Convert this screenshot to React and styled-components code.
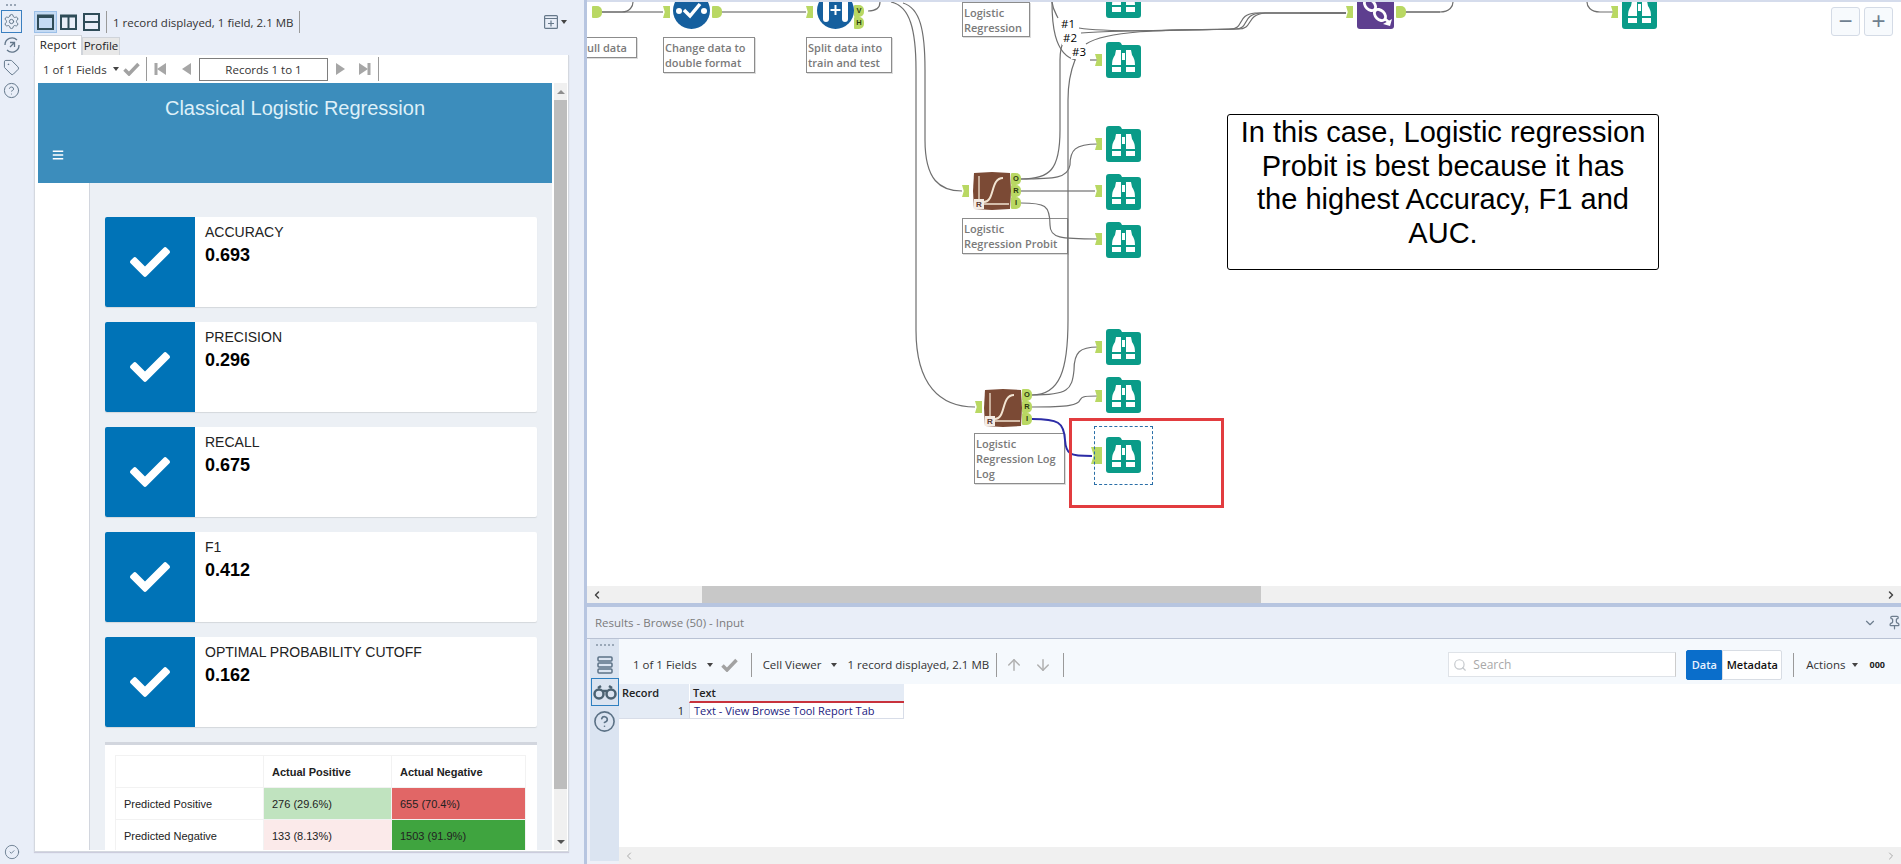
import React from 'react';
import styled, { createGlobalStyle, css } from 'styled-components';
import { FaCheck, FaBars } from 'react-icons/fa';
import { Settings, Tag, CircleHelp, CircleCheck, Search, ArrowUp, ArrowDown, ChevronDown, Pin, ChevronLeft, ChevronRight } from 'lucide-react';

const Global = createGlobalStyle`
  html, body { margin: 0; padding: 0; background: #e9eef8; overflow: hidden; }
  * { box-sizing: border-box; }
`;
const UI = `"Open Sans", "Noto Sans", sans-serif`;
const WEB = `"Liberation Sans", Arial, sans-serif`;
const CX = 587;
const place = css`position: absolute; left: ${p => p.$x - CX}px; top: ${p => p.$y}px;`;

const Page = styled.div`width: 1901px; height: 864px; display: flex; background: #e9eef8; font-family: ${UI}; overflow: hidden;`;
const Rail = styled.div`width: 34px; flex: none; display: flex; flex-direction: column; align-items: flex-start; padding: 4px 0 0 2px; color: #62768a;`;
const RailDots = styled.div`width: 10px; height: 7px; margin-left: 4px; border-top: 2px dotted #9aa6b6;`;
const RailBtn = styled.div`width: 19px; height: 21px; margin-bottom: 2px; display: flex; align-items: center; justify-content: center; ${p => p.$on && 'outline: 1px solid #3a7fc0; outline-offset: 0;'}`;
const RailSpacer = styled.div`flex: 1;`;

const LeftPane = styled.div`width: 550px; flex: none; display: flex; flex-direction: column; padding-top: 11px;`;
const TopBar = styled.div`height: 22px; display: flex; align-items: center; color: #333; font-size: 11.5px;`;
const LayoutBtn = styled.div`width: ${p => p.$w}px; height: 22px; margin-right: ${p => p.$m}px; display: flex; align-items: center; justify-content: center; ${p => p.$on && 'background: #c4daf3; border: 1px solid #9cc0e8;'}`;
const VLine = styled.div`width: 1px; height: ${p => p.$h || 22}px; background: #9a9a9a; margin: 0 ${p => p.$m || 6}px; flex: none;`;
const BarFill = styled.div`flex: 1;`;
const AddBtn = styled.div`display: flex; align-items: center; gap: 3px; margin-right: 17px; color: #66788a;`;
const Caret = styled.span`display: inline-block; width: 0; height: 0; border-left: 3.5px solid transparent; border-right: 3.5px solid transparent; border-top: 4px solid ${p => p.$c || '#444'};`;
const Tabs = styled.div`height: 22px; display: flex; align-items: flex-end; padding-top: 2px;`;
const Tab = styled.div`height: ${p => p.$on ? 20 : 18}px; width: ${p => p.$w}px; background: ${p => p.$on ? '#fff' : '#e8e8e8'}; border: 1px solid #d0d4da; border-bottom: 0; color: #222; font-size: 11.5px; text-align: center; line-height: ${p => p.$on ? 17 : 16}px;`;
const Panel = styled.div`width: 535px; height: 797px; background: #fff; border: 1px solid #d4d8df; border-top: 0; display: flex; flex-direction: column; box-shadow: 0 1px 1px #ccd;`;
const RecBar = styled.div`height: 28px; display: flex; align-items: center; padding-left: 8px; color: #333; font-size: 11.5px; flex: none;`;
const FieldsLabel = styled.span`width: 70px; white-space: nowrap;`;
const RecIcon = styled.div`width: ${p => p.$w}px; display: flex; justify-content: center; align-items: center; flex: none;`;
const RecBox = styled.div`width: 129px; height: 23px; border: 1px solid #7e7e7e; text-align: center; line-height: 21px; flex: none; color: #333; font-size: 11.5px;`;
const ReportRow = styled.div`flex: 1; display: flex; min-height: 0; padding-left: 3px; padding-bottom: 1px;`;
const Report = styled.div`width: 514px; display: flex; flex-direction: column; overflow: hidden; font-family: ${WEB};`;
const Banner = styled.div`height: 100px; flex: none; background: #3c8dbc; color: #def0f8; position: relative; padding-top: 13px; text-align: center; font-size: 20px; line-height: 24px;`;
const Burger = styled.div`position: absolute; left: 14px; top: 66px; color: #fff; display: flex;`;
const ReportBody = styled.div`flex: 1; display: flex; min-height: 0;`;
const SideNav = styled.div`width: 52px; flex: none; background: #fff; border-right: 1px solid #d2d6de;`;
const Content = styled.div`flex: 1; background: #ecf0f5; padding: 34px 15px 0; overflow: hidden;`;
const Card = styled.div`height: 90px; display: flex; background: #fff; border-radius: 2px; box-shadow: 0 1px 1px rgba(0,0,0,.1); margin-bottom: 15px;`;
const CardIcon = styled.div`width: 90px; background: #0073b7; color: #fff; display: flex; align-items: center; justify-content: center; border-radius: 2px 0 0 2px;`;
const CardText = styled.div`padding: 7px 10px;`;
const CardLabel = styled.div`font-size: 14px; line-height: 16px; color: #222; margin-bottom: 4px;`;
const CardValue = styled.div`font-size: 18px; line-height: 22px; font-weight: 700; color: #000;`;
const MatrixBox = styled.div`background: #fff; border-top: 3px solid #d2d6de; padding: 10px 10px 0; height: 122px;`;
const Matrix = styled.table`width: 410px; border-collapse: collapse; table-layout: fixed; font-size: 11px; color: #222;`;
const MTh = styled.th`height: 32px; text-align: left; padding: 0 8px; border: 1px solid #f2f2f2; font-weight: 700; width: ${p => p.$w}px;`;
const MTd = styled.td`height: 32px; padding: 0 8px; border: 1px solid #f2f2f2; background: ${p => p.$bg || '#fff'};`;
const VScroll = styled.div`width: 13px; margin-left: 2px; background: #f0f0f0; position: relative; display: flex; flex-direction: column; align-items: center; flex: none;`;
const VThumb = styled.div`position: absolute; top: 17px; width: 13px; height: 689px; background: #bdbdbd;`;
const ArrowTop = styled.div`position: absolute; top: 7px; width: 0; height: 0; border-left: 4px solid transparent; border-right: 4px solid transparent; border-bottom: 4px solid #8e8e8e;`;
const ArrowBottom = styled.div`position: absolute; bottom: 6px; width: 0; height: 0; border-left: 4px solid transparent; border-right: 4px solid transparent; border-top: 4px solid #555;`;

const Divider = styled.div`width: 3px; flex: none; background: #b7c5e0;`;
const Main = styled.div`flex: 1; display: flex; flex-direction: column; min-width: 0;`;
const Canvas = styled.div`height: 586px; position: relative; overflow: hidden; background: #fff; border-top: 2px solid #d5dcec; flex: none;`;
const CanvasInner = styled.div`position: absolute; left: 0; top: -2px; width: 1314px; height: 586px;`;
const Wires = styled.svg`position: absolute; left: 0; top: 0; pointer-events: none;`;
const NodeLabel = styled.div`${place} width: ${p => p.$w}px; height: ${p => p.$h}px; border: 1px solid #8c8c8c; box-shadow: 1px 1px 0 #ddd; background: #fff; color: #7a7a7a; font-size: 11px; font-weight: 600; line-height: 15px; padding: ${p => p.$pt || 2}px 0 2px ${p => p.$pl || 1}px; white-space: pre-line; overflow: hidden;`;
const Icon = styled.svg`${place} display: block;`;
const InAnchor = styled.div`${place} width: ${p => p.$big ? 11 : 7}px; height: ${p => p.$big ? 17 : 12}px; background: #b9d863; clip-path: polygon(0 0, 100% 0, 100% 100%, 0 100%, 25% 50%);`;
const OutAnchor = styled.div`${place} width: 10px; height: 12px; background: #b9d863; border-radius: 1px 5px 5px 1px; color: #2c3a10; font: 700 7.5px/12px ${WEB}; text-align: center;`;
const WireTag = styled.div`${place} color: #000; background: #fff; font: 400 11.5px/14px ${UI}; padding: 0 1px;`;
const Selection = styled.div`${place} width: 59px; height: 59px; border: 1px dashed #2a6fa8;`;
const RedBox = styled.div`${place} width: 155px; height: 90px; border: 3px solid #e23c3f;`;
const Note = styled.div`${place} width: 432px; height: 156px; border: 1px solid #000; border-radius: 3px; background: #fff; color: #000; font: 400 29px/33.5px ${WEB}; text-align: center; padding: 1px 0; white-space: pre-line;`;
const ZoomBtn = styled.div`${place} width: 29px; height: 29px; border: 1px solid #d4dbe6; border-radius: 3px; background: #f7fafd; color: #6f7f90; font: 400 24px/25px ${WEB}; text-align: center;`;

const HScroll = styled.div`height: 17px; background: #f0f0f0; position: relative; flex: none; display: flex; align-items: center; justify-content: space-between; padding: 0 4px; color: #444;`;
const HThumb = styled.div`position: absolute; left: 115px; top: 0; width: 559px; height: 100%; background: #c8c8c8;`;
const BlueBar = styled.div`height: 4px; background: #b7c5e0; flex: none;`;
const ResultsHead = styled.div`height: 32px; flex: none; background: #e9eef8; border-bottom: 1px solid #b9c2d4; display: flex; align-items: center; justify-content: space-between; padding: 0 0 0 8px; color: #7b7b7b; font-size: 11.5px;`;
const HeadIcons = styled.div`display: flex; align-items: center; gap: 10px; color: #6e7d8e; margin-right: -1px;`;
const Results = styled.div`flex: 1; display: flex; min-height: 0; padding-left: 3px; background: #eef0f8;`;
const ResRail = styled.div`width: 29px; flex: none; background: #dbe4f1; display: flex; flex-direction: column; align-items: center; padding-top: 5px; color: #5c7286; margin-bottom: 3px;`;
const ResDots = styled.div`width: 18px; height: 8px; border-top: 2px dotted #9aa8b8;`;
const ResBtn = styled.div`width: 28px; height: ${p => p.$h || 28}px; display: flex; align-items: center; justify-content: center; margin-bottom: ${p => p.$m || 0}px; ${p => p.$on && 'border: 1px solid #2e7fc0;'}`;
const ResMain = styled.div`flex: 1; display: flex; flex-direction: column; min-width: 0;`;
const ResBar = styled.div`height: 45px; flex: none; background: #f5f9fd; display: flex; align-items: center; color: #333; font-size: 11.5px; padding: 6px 0 0 14px;`;
const ResText = styled.span`white-space: nowrap; margin-right: ${p => p.$m || 0}px; margin-left: ${p => p.$l || 0}px;`;
const SearchBox = styled.div`width: 228px; height: 25px; margin-right: 10px; background: #fff; border: 1px solid #dfe3e8; border-right-color: #ccc; display: flex; align-items: center; gap: 6px; padding-left: 4px; color: #a8a8a8; font-size: 12px;`;
const Seg = styled.div`display: flex; height: 30px; font-size: 11px; font-weight: 600;`;
const SegBtn = styled.div`width: ${p => p.$w}px; line-height: 28px; text-align: center; border-radius: ${p => p.$on ? '2px 0 0 2px' : '0 2px 2px 0'}; background: ${p => p.$on ? '#0a6ecb' : '#fff'}; color: ${p => p.$on ? '#e8f2ff' : '#111'}; border: 1px solid ${p => p.$on ? '#0a6ecb' : '#d8dde4'};`;
const More = styled.span`font-weight: 700; font-size: 9px; margin: 0 16px 0 12px; color: #222;`;
const GridArea = styled.div`flex: 1; background: #fff; min-height: 0; overflow: hidden;`;
const Grid = styled.div`display: grid; grid-template-columns: 70px 215px; grid-template-rows: 19px 16px; width: 285px; font-size: 11px; line-height: 15px; color: #222;`;
const GridHead = styled.div`background: #e4ebf5; font-weight: 600; padding: 1px 3px 0; ${p => p.$sort && 'border-bottom: 2px solid #c8323c; border-left: 1px solid #fff;'}`;
const GridNum = styled.div`background: #e4ebf5; text-align: right; padding-right: 5px; border-bottom: 1px solid #d8dde8;`;
const GridCell = styled.div`color: #1a1a80; padding-left: 4px; border: 1px solid #d8dde8; border-top: 0; white-space: nowrap;`;
const ResScroll = styled.div`height: 17px; flex: none; background: #f0f0f0; display: flex; justify-content: space-between; align-items: center; padding: 0 4px; color: #aaa;`;

const Folder = ({ x, y }) => (
  <Icon $x={x} $y={y} width="35" height="36" viewBox="0 0 35 36">
    <path fill="#0a9b88" d="M3 0H13Q15 0 16 3H32a3 3 0 0 1 3 3V33a3 3 0 0 1-3 3H3a3 3 0 0 1-3-3V3a3 3 0 0 1 3-3z" />
    <g fill="#fff">
      <path d="M10 8H15V23H6Q6 17 9 13Z" /><path d="M25 8H20V23H29Q29 17 26 13Z" />
      <path d="M6 25H15V30H6Z" /><path d="M20 25H29V30H20Z" />
      <rect x="16" y="11" width="3" height="7" />
    </g>
  </Icon>
);
const Logit = ({ x, y }) => (
  <Icon $x={x} $y={y} width="38" height="38" viewBox="0 0 38 38">
    <path fill="#7b4a35" d="M1 1L19 0L37 1L38 19L37 37L19 38L1 37L0 19Z" />
    <g fill="none" stroke="#f2e4d2">
      <path d="M6 4V30" strokeWidth="1.300" /><path d="M10 32H36" strokeWidth="1.500" />
      <path d="M11 30C22 30 17 6 30 6" strokeWidth="2" />
    </g>
    <rect x="1" y="27" width="10" height="10" fill="#f4ece4" />
    <text x="6" y="35" fontSize="8" fontWeight="700" textAnchor="middle" fill="#5a3a30" fontFamily="Liberation Sans">R</text>
  </Icon>
);
const Dna = ({ x, y }) => (
  <Icon $x={x} $y={y} width="37" height="37" viewBox="0 0 37 37">
    <rect width="37" height="37" rx="3" fill="#5e3f8f" />
    <g fill="none" stroke="#fff" strokeWidth="2.800">
      <ellipse cx="13" cy="13" rx="6.500" ry="4.500" transform="rotate(45 13 13)" />
      <ellipse cx="23" cy="23" rx="6.500" ry="4.500" transform="rotate(45 23 23)" />
      <path d="M6 4L9 9M28 27L33 31" />
    </g>
    <path d="M26 32L35 27L33 34Z" fill="#fff" />
  </Icon>
);
const Circle1 = ({ x, y }) => (
  <Icon $x={x} $y={y} width="37" height="37" viewBox="0 0 37 37">
    <circle cx="18.500" cy="18.500" r="18.500" fill="#155f9e" />
    <circle cx="6" cy="19" r="3" fill="#fff" /><circle cx="31" cy="19" r="3" fill="#fff" />
    <path d="M11 18L17 24L27 12" fill="none" stroke="#fff" strokeWidth="3.500" />
  </Icon>
);
const Circle2 = ({ x, y }) => (
  <Icon $x={x} $y={y} width="37" height="37" viewBox="0 0 37 37">
    <circle cx="18.500" cy="18.500" r="18.500" fill="#155f9e" />
    <rect x="6" y="0" width="6" height="30" rx="3" fill="#fff" /><rect x="25" y="0" width="6" height="30" rx="3" fill="#fff" />
    <path d="M18.500 13V23M13.500 18H23.500" stroke="#fff" strokeWidth="2" />
  </Icon>
);
const Triangles = ({ dir, bar }) => (
  <svg width="14" height="14" viewBox="0 0 14 14" style={dir === 'l' ? undefined : { transform: 'scaleX(-1)' }}>
    <path d="M12 1V13L3 7Z" fill="#a6a6a6" />
    {bar && <rect x="0.500" y="1" width="3" height="12" fill="#a6a6a6" />}
  </svg>
);
const ThickCheck = () => (
  <svg width="17" height="14" viewBox="0 0 17 14"><path d="M1.500 7.500L6 12L15.500 2" fill="none" stroke="#a2a2a2" strokeWidth="3.500" /></svg>
);
const FrameIcon = ({ kind }) => (
  <svg width="17" height="18" viewBox="0 0 17 18" fill="none" stroke="#2f4c58" strokeWidth="2">
    <rect x="1" y={kind === 'rows' ? 1 : 2.500} width="15" height={kind === 'rows' ? 16 : 13.500} />
    {kind === 'one' && <path d="M1 3.500H16" strokeWidth="3" />}
    {kind === 'cols' && <path d="M8.500 2V16M1 3.500H16" />}
    {kind === 'rows' && <path d="M1 9H16" />}
  </svg>
);

const metrics = [['ACCURACY', '0.693'], ['PRECISION', '0.296'], ['RECALL', '0.675'], ['F1', '0.412'], ['OPTIMAL PROBABILITY CUTOFF', '0.162']];
const browse = [[1106, -18], [1106, 42], [1106, 126], [1106, 174], [1106, 222], [1106, 329], [1106, 377], [1106, 437], [1622, -7]];
const inputs = [[1095, 54], [1095, 138], [1095, 185], [1095, 233], [1095, 341], [1095, 390], [1611, 6], [663, 6], [806, 6], [1346, 6], [962, 185], [975, 401]];
const outs = [[592, 6, ''], [712, 6, ''], [1396, 6, ''], [854, 5, 'V'], [854, 17, 'H'], [1011, 173, 'O'], [1011, 185, 'R'], [1011, 197, 'I'], [1022, 389, 'O'], [1022, 401, 'R'], [1022, 413, 'I']];
const thin = [
  'M891 2C910 6 916 30 916 70V330C916 385 940 407 975 407',
  'M903 3C920 8 925 30 925 70V140C925 180 940 191 962 191',
  'M1021 179C1050 179 1060 170 1060 130V60C1060 48 1063 42 1064 40',
  'M1032 395C1060 395 1068 370 1068 320V100C1068 80 1071 70 1075 60',
  'M1021 179C1055 179 1068 178 1070 165C1070 150 1075 144 1098 144',
  'M1021 203C1045 203 1050 205 1050 225C1050 238 1060 239 1098 239',
  'M1032 395C1068 395 1072 390 1074 370C1074 352 1080 347 1098 347',
  'M1032 407C1070 407 1078 405 1080 400C1082 396 1086 396 1098 396',
  'M1052 2C1053 10 1056 14 1058 18',
  'M1052 2C1052 20 1053 55 1076 60',
  'M1079 28C1110 33 1200 30 1230 29C1245 29 1236 15 1255 13H1346',
  'M1081 33C1120 30 1200 30 1235 29C1250 29 1241 15 1260 13H1346',
  'M1086 44C1110 28 1190 30 1238 29C1254 29 1245 15 1265 13H1346',
  'M600 12H622C630 12 633 6 633 2',
  'M868 11C876 11 880 8 880 2',
  'M1406 12H1440C1450 12 1453 6 1453 2',
  'M1614 12H1600C1590 12 1587 6 1587 2',
];
const thick = ['M722 12H806', 'M600 12H663', 'M1021 191H1095', 'M1406 12H1440', 'M1090 60H1097', 'M1300 13H1346'];

export default function App() {
  return (
    <Page>
      <Global />
      <Rail>
        <RailDots />
        <RailBtn $on><Settings size={17} strokeWidth={1.400} /></RailBtn>
        <RailBtn>
          <svg width="18" height="18" viewBox="0 0 18 18" fill="none" stroke="currentColor" strokeWidth="1.300">
            <path d="M2 9a7 7 0 0 1 12-5M16 9a7 7 0 0 1-12 5" /><path d="M7 6.500h4.500V11M11.500 6.500L7 11" />
          </svg>
        </RailBtn>
        <RailBtn><Tag size={17} strokeWidth={1.400} /></RailBtn>
        <RailBtn><CircleHelp size={17} strokeWidth={1.400} /></RailBtn>
        <RailSpacer />
        <RailBtn><CircleCheck size={16} strokeWidth={1.300} /></RailBtn>
      </Rail>

      <LeftPane>
        <TopBar>
          <LayoutBtn $w={23} $m={3} $on><FrameIcon kind="one" /></LayoutBtn>
          <LayoutBtn $w={17} $m={6}><FrameIcon kind="cols" /></LayoutBtn>
          <LayoutBtn $w={17} $m={0}><FrameIcon kind="rows" /></LayoutBtn>
          <VLine />
          <span>1 record displayed, 1 field, 2.1 MB</span>
          <VLine />
          <BarFill />
          <AddBtn>
            <svg width="14" height="14" viewBox="0 0 14 14" fill="none" stroke="#66788a" strokeWidth="1.200"><rect x=".6" y=".6" width="12.800" height="12.800" rx="1" /><path d="M1 3.500H13M7 5.500V11.500M4 8.500H10" /></svg>
            <Caret />
          </AddBtn>
        </TopBar>
        <Tabs>
          <Tab $on $w={48}>Report</Tab>
          <Tab $w={38}>Profile</Tab>
        </Tabs>
        <Panel>
          <RecBar>
            <FieldsLabel>1 of 1 Fields</FieldsLabel>
            <Caret />
            <RecIcon $w={25}><ThickCheck /></RecIcon>
            <VLine $h={24} $m={2} />
            <RecIcon $w={24}><Triangles dir="l" bar /></RecIcon>
            <RecIcon $w={26}><Triangles dir="l" /></RecIcon>
            <RecBox>Records 1 to 1</RecBox>
            <RecIcon $w={26}><Triangles dir="r" /></RecIcon>
            <RecIcon $w={20}><Triangles dir="r" bar /></RecIcon>
            <VLine $h={24} $m={4} />
          </RecBar>
          <ReportRow>
            <Report>
              <Banner>
                Classical Logistic Regression
                <Burger><FaBars size={12} /></Burger>
              </Banner>
              <ReportBody>
                <SideNav />
                <Content>
                  {metrics.map(([label, value]) => (
                    <Card key={label}>
                      <CardIcon><FaCheck size={40} /></CardIcon>
                      <CardText>
                        <CardLabel>{label}</CardLabel>
                        <CardValue>{value}</CardValue>
                      </CardText>
                    </Card>
                  ))}
                  <MatrixBox>
                    <Matrix>
                      <thead>
                        <tr><MTh $w={148} /><MTh $w={128}>Actual Positive</MTh><MTh $w={134}>Actual Negative</MTh></tr>
                      </thead>
                      <tbody>
                        <tr><MTd>Predicted Positive</MTd><MTd $bg="#c0e3bf">276 (29.6%)</MTd><MTd $bg="#e16666">655 (70.4%)</MTd></tr>
                        <tr><MTd>Predicted Negative</MTd><MTd $bg="#fbeaea">133 (8.13%)</MTd><MTd $bg="#3fa43f">1503 (91.9%)</MTd></tr>
                      </tbody>
                    </Matrix>
                  </MatrixBox>
                </Content>
              </ReportBody>
            </Report>
            <VScroll><ArrowTop /><VThumb /><ArrowBottom /></VScroll>
          </ReportRow>
        </Panel>
      </LeftPane>

      <Divider />
      <Main>
        <Canvas>
          <CanvasInner>
            <NodeLabel $x={570} $y={37} $w={67} $h={21} $pl={16}>ull data</NodeLabel>
            <NodeLabel $x={663} $y={37} $w={92} $h={36}>{'Change data to\ndouble format'}</NodeLabel>
            <NodeLabel $x={806} $y={37} $w={86} $h={36}>{'Split data into\ntrain and test'}</NodeLabel>
            <NodeLabel $x={962} $y={2} $w={68} $h={35} $pt={0}>{'Logistic\nRegression'}</NodeLabel>
            <NodeLabel $x={962} $y={218} $w={106} $h={36}>{'Logistic\nRegression Probit'}</NodeLabel>
            <NodeLabel $x={974} $y={433} $w={91} $h={51}>{'Logistic\nRegression Log\nLog'}</NodeLabel>
            <Wires width="1314" height="586" viewBox="587 0 1314 586">
              {thick.map(d => <path key={d} d={d} fill="none" stroke="#a9a9a9" strokeWidth="2" />)}
              {thin.map(d => <path key={d} d={d} fill="none" stroke="#6f6f6f" strokeWidth="1.200" />)}
              <path d="M1032 419C1058 419 1064 422 1065 440C1066 455 1070 456 1092 456" fill="none" stroke="#2c2ca6" strokeWidth="2" />
            </Wires>
            <Circle1 x={673} y={-8} />
            <Circle2 x={817} y={-8} />
            <Dna x={1357} y={-8} />
            <Logit x={973} y={172} />
            <Logit x={984} y={389} />
            {browse.map(([x, y]) => <Folder key={`${x}-${y}`} x={x} y={y} />)}
            {inputs.map(([x, y]) => <InAnchor key={`${x}-${y}`} $x={x} $y={y} />)}
            <InAnchor $big $x={1091} $y={447} />
            {outs.map(([x, y, t]) => <OutAnchor key={`${x}-${y}`} $x={x} $y={y}>{t}</OutAnchor>)}
            <WireTag $x={1060} $y={17}>#1</WireTag>
            <WireTag $x={1062} $y={31}>#2</WireTag>
            <WireTag $x={1071} $y={45}>#3</WireTag>
            <Selection $x={1094} $y={426} />
            <RedBox $x={1069} $y={418} />
            <Note $x={1227} $y={114}>{'In this case, Logistic regression\nProbit is best because it has\nthe highest Accuracy, F1 and\nAUC.'}</Note>
            <ZoomBtn $x={1831} $y={7}>−</ZoomBtn>
            <ZoomBtn $x={1864} $y={7}>+</ZoomBtn>
          </CanvasInner>
        </Canvas>
        <HScroll>
          <HThumb />
          <ChevronLeft size={12} strokeWidth={3} />
          <ChevronRight size={12} strokeWidth={3} />
        </HScroll>
        <BlueBar />
        <ResultsHead>
          <span>Results - Browse (50) - Input</span>
          <HeadIcons>
            <ChevronDown size={14} />
            <Pin size={15} />
          </HeadIcons>
        </ResultsHead>
        <Results>
          <ResRail>
            <ResDots />
            <ResBtn $h={26}>
              <svg width="18" height="18" viewBox="0 0 18 18" fill="none" stroke="currentColor" strokeWidth="1.500"><rect x="2" y="1" width="14" height="4" rx="1" /><rect x="2" y="7" width="14" height="4" rx="1" /><rect x="2" y="13" width="14" height="4" rx="1" /></svg>
            </ResBtn>
            <ResBtn $on $m={1}>
              <svg width="24" height="16" viewBox="0 0 24 16" fill="none" stroke="#4c6272" strokeWidth="2.500"><circle cx="6" cy="10" r="4.500" /><circle cx="18" cy="10" r="4.500" /><path d="M5 4L8 2M19 4L16 2M10 7H14" /></svg>
            </ResBtn>
            <ResBtn><CircleHelp size={23} strokeWidth={1.700} /></ResBtn>
          </ResRail>
          <ResMain>
            <ResBar>
              <ResText $m={10}>1 of 1 Fields</ResText>
              <Caret />
              <RecIcon $w={34}><ThickCheck /></RecIcon>
              <VLine $h={24} $m={4} />
              <ResText $m={10} $l={7}>Cell Viewer</ResText>
              <Caret />
              <ResText $l={10}>1 record displayed, 2.1 MB</ResText>
              <VLine $h={24} $m={7} />
              <RecIcon $w={20}><ArrowUp size={18} color="#b0b0b0" strokeWidth={2} /></RecIcon>
              <RecIcon $w={38}><ArrowDown size={18} color="#b0b0b0" strokeWidth={2} /></RecIcon>
              <VLine $h={24} $m={1} />
              <BarFill />
              <SearchBox><Search size={14} color="#c4c8cc" />Search</SearchBox>
              <Seg><SegBtn $on $w={36}>Data</SegBtn><SegBtn $w={60}>Metadata</SegBtn></Seg>
              <VLine $h={24} $m={11} />
              <ResText $m={6} $l={1}>Actions</ResText>
              <Caret />
              <More>000</More>
            </ResBar>
            <GridArea>
              <Grid>
                <GridHead>Record</GridHead>
                <GridHead $sort>Text</GridHead>
                <GridNum>1</GridNum>
                <GridCell>Text - View Browse Tool Report Tab</GridCell>
              </Grid>
            </GridArea>
            <ResScroll>
              <ChevronLeft size={12} />
              <ChevronRight size={12} />
            </ResScroll>
          </ResMain>
        </Results>
      </Main>
    </Page>
  );
}
